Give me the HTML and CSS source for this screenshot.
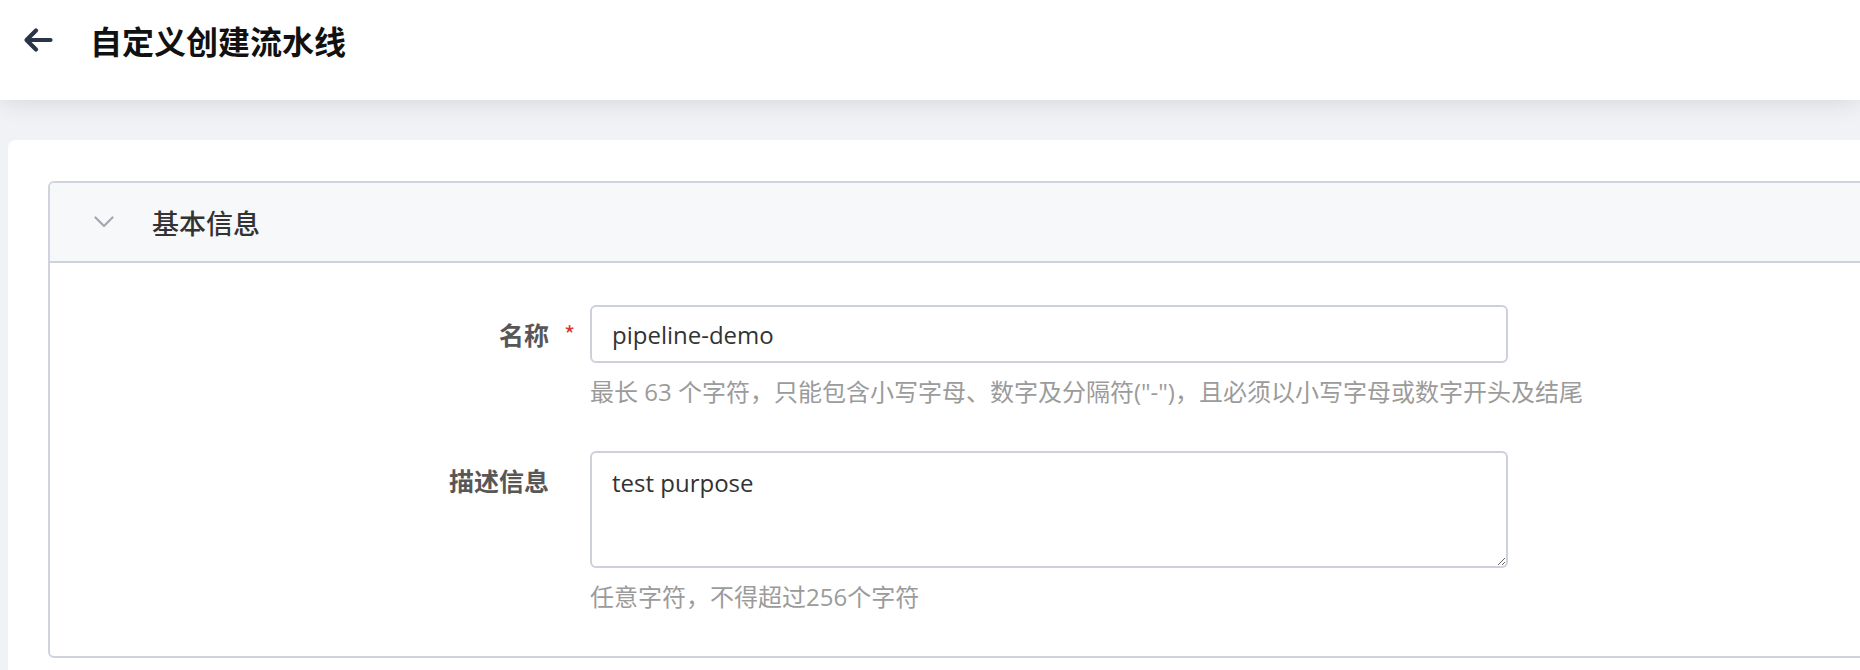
FILE: index.html
```html
<!DOCTYPE html>
<html lang="zh-CN">
<head>
<meta charset="utf-8">
<title>自定义创建流水线</title>
<link rel="stylesheet" href="styles.css">
</head>
<body>
<header class="topbar">
  <div class="topbar-row">
    <svg class="back-icon" width="30" height="26" viewBox="0 0 30 26" aria-hidden="true">
      <path d="M27.5 13 H4 M13 3.5 L3.5 13 L13 22.5" fill="none" stroke="#2a3547" stroke-width="4.2" stroke-linecap="round" stroke-linejoin="round"/>
    </svg>
    <h1 class="page-title">自定义创建流水线</h1>
  </div>
</header>
<main class="page">
  <section class="card">
    <div class="panel">
      <div class="panel-head">
        <svg class="chevron" width="20" height="12" viewBox="0 0 20 12" aria-hidden="true">
          <polyline points="1.5,1.5 10,10 18.5,1.5" fill="none" stroke="#a3a8b1" stroke-width="2.2" stroke-linecap="round" stroke-linejoin="round"/>
        </svg>
        <span class="panel-title">基本信息</span>
      </div>
      <div class="panel-body">
        <div class="form-row">
          <label class="form-label" for="name">名称</label>
          <span class="required">*</span>
          <div class="form-control">
            <input id="name" class="text-input" type="text" value="pipeline-demo">
            <div class="hint">最长 63 个字符，只能包含小写字母、数字及分隔符("-")，且必须以小写字母或数字开头及结尾</div>
          </div>
        </div>
        <div class="form-row">
          <label class="form-label" for="desc">描述信息</label>
          <span class="required"></span>
          <div class="form-control">
            <textarea id="desc" class="text-area">test purpose</textarea>
            <div class="hint">任意字符，不得超过256个字符</div>
          </div>
        </div>
      </div>
    </div>
  </section>
</main>
</body>
</html>
```
FILE: styles.css
```css
html, body {
  margin: 0;
  padding: 0;
}
body {
  background: #f0f2f5;
  font-family: "Open Sans", "Noto Sans CJK SC", sans-serif;
  overflow: hidden;
  width: 1860px;
  height: 670px;
}
.topbar {
  position: relative;
  z-index: 1;
  box-sizing: border-box;
  height: 100px;
  background: #ffffff;
  padding: 24px 0 0 23px;
  box-shadow: 0 3px 22px rgba(40, 45, 60, 0.12);
}
.topbar-row {
  display: flex;
  align-items: center;
  height: 32px;
}
.back-icon {
  display: block;
  flex: none;
}
.page-title {
  margin: 0 0 0 37px;
  font-family: "Noto Sans CJK SC", sans-serif;
  font-size: 32px;
  line-height: 32px;
  font-weight: 700;
  color: #111111;
}
.page {
  padding: 40px 0 0 8px;
}
.card {
  box-sizing: border-box;
  width: 1960px;
  background: #ffffff;
  border-radius: 8px;
  padding: 41px 0 40px 40px;
}
.panel {
  border: 2px solid #cfd3dc;
  border-radius: 6px;
}
.panel-head {
  display: flex;
  align-items: center;
  height: 78px;
  background: #f7f8fa;
  border-bottom: 2px solid #cfd3dc;
  border-radius: 4px 4px 0 0;
  padding-left: 44px;
}
.chevron {
  display: block;
  flex: none;
}
.panel-title {
  margin-left: 38px;
  font-family: "Noto Sans CJK SC", sans-serif;
  font-size: 27px;
  font-weight: 500;
  color: #333333;
}
.panel-body {
  padding: 42px 0 42px;
  display: flex;
  flex-direction: column;
  gap: 42px;
}
.form-row {
  display: grid;
  grid-template-columns: 499px 41px 918px;
  align-items: start;
}
.form-label {
  text-align: right;
  font-family: "Noto Sans CJK SC", sans-serif;
  font-size: 25px;
  line-height: 58px;
  font-weight: 700;
  color: #575757;
}
.required {
  text-align: center;
  color: #e0322f;
  font-size: 24px;
  line-height: 58px;
  font-family: "Noto Sans CJK SC", sans-serif;
}
.form-control {
  display: flex;
  flex-direction: column;
}
.text-input,
.text-area {
  box-sizing: border-box;
  width: 918px;
  margin: 0;
  border: 2px solid #cdd1db;
  border-radius: 6px;
  background: #ffffff;
  font-family: "Open Sans", "Noto Sans CJK SC", sans-serif;
  font-size: 24px;
  color: #333333;
  outline: none;
}
.text-input {
  height: 58px;
  padding: 0 20px;
}
.text-area {
  display: block;
  height: 117px;
  padding: 13px 20px;
  line-height: 34px;
  resize: vertical;
}
.hint {
  margin-top: 12px;
  font-size: 24px;
  line-height: 34px;
  color: #9b9b9b;
  white-space: nowrap;
}
```
